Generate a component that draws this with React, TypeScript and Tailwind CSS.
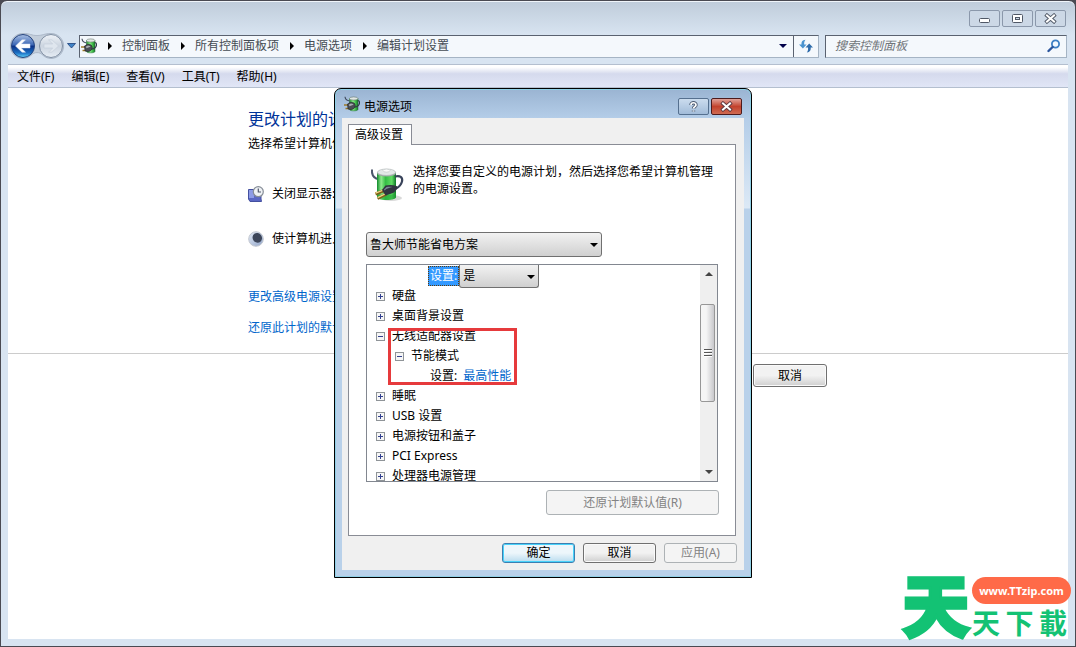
import React, { useState } from 'react';
import { clsx } from 'clsx';

const BREADCRUMBS = ['控制面板', '所有控制面板项', '电源选项', '编辑计划设置'];
const MENUS = ['文件(F)', '编辑(E)', '查看(V)', '工具(T)', '帮助(H)'];
const PLANS = ['鲁大师节能省电方案'];

/* ---------- icons ---------- */

function PowerIcon() {
  return (
    <svg width="16" height="16" viewBox="0 0 16 16" className="shrink-0" aria-hidden="true">
      <defs>
        <linearGradient id="cellSmall" x1="0" x2="1" y1="0" y2="0">
          <stop offset="0" stopColor="#1f9433" />
          <stop offset="0.4" stopColor="#8bea86" />
          <stop offset="0.7" stopColor="#43c04c" />
          <stop offset="1" stopColor="#17752a" />
        </linearGradient>
      </defs>
      <path d="M5.500 2.500v11c0 1.800 8.500 1.800 8.500 0v-11z" fill="url(#cellSmall)" stroke="#256b33" strokeWidth="0.5" />
      <ellipse cx="9.700" cy="2.500" rx="4.200" ry="1.600" fill="#e0e7e3" stroke="#6d7a73" strokeWidth="0.6" />
      <path d="M1 .8C1.200 3 2.500 4.500 5.500 5" fill="none" stroke="#3a4456" strokeWidth="1.100" />
      <path d="M13.800 4.500c2.200.3 2.200 3.500.2 5.200-1 .9-2 1.300-3.500 1.500" fill="none" stroke="#2f3848" strokeWidth="1.200" />
      <path d="M0 9h4M1.500 12.500h3.500" stroke="#9c7a28" strokeWidth="1.400" />
      <path d="M3.500 8 6.500 6.300c2.500-.3 4.700.9 4.700 3.200 0 2.400-2 3.800-4 4L4 13z" fill="#4a4e55" stroke="#1c1f24" strokeWidth="0.6" />
      <path d="M5 8.500 7 7.400c1.200.1 2 .6 2.500 1.400L5.400 10.200z" fill="#a9aeb4" />
    </svg>
  );
}

function PowerIconLarge() {
  return (
    <svg width="36" height="36" viewBox="0 0 36 36" className="shrink-0" aria-hidden="true">
      <defs>
        <linearGradient id="cell" x1="0" x2="1" y1="0" y2="0">
          <stop offset="0" stopColor="#0f8a2b" />
          <stop offset="0.22" stopColor="#8fea8c" />
          <stop offset="0.45" stopColor="#35bd45" />
          <stop offset="0.78" stopColor="#5fdc62" />
          <stop offset="1" stopColor="#0c7425" />
        </linearGradient>
      </defs>
      <ellipse cx="22" cy="31" rx="11" ry="3" fill="#d9d9d9" />
      <path d="M8 6v24c0 4 19 4 19 0V6z" fill="url(#cell)" />
      <path d="M8 25v5c0 4 19 4 19 0v-5c0 4-19 4-19 0z" fill="#27a83b" opacity="0.6" />
      <ellipse cx="17.500" cy="6" rx="9.500" ry="3.600" fill="#9ea8a5" />
      <ellipse cx="17.500" cy="5.200" rx="9" ry="3.200" fill="#e3e8e7" stroke="#a1a9a8" strokeWidth="0.5" />
      <ellipse cx="17.500" cy="3.600" rx="3.500" ry="1.500" fill="#fafafa" stroke="#b4baba" strokeWidth="0.5" />
      <path d="M3 2.500C2.500 7 4.500 10.500 8 12" fill="none" stroke="#4c566b" strokeWidth="2" />
      <path d="M26 9.500c5-1.500 8 1 7 5-.8 3-2.800 5.500-6 7" fill="none" stroke="#39435a" strokeWidth="2.200" />
      <path d="M15 23.500 6.500 27M17.500 27 8.500 31.500" stroke="#806018" strokeWidth="3" />
      <path d="M14.500 23 6.500 26.200M17 26.500 8.500 30.600" stroke="#f0d78a" strokeWidth="1.300" />
      <path d="M13 23 16.500 18.500c4-1 8-.7 11.500.7 1.500 1.300-1 4.800-4 6.800l-7.500 2.500z" fill="#30343f" />
      <path d="M15 22.500 17.500 20c2-.4 4.500-.5 6 0-3 .5-5.500 1.400-8 3.400z" fill="#7c8496" />
    </svg>
  );
}

function NavButtons() {
  return (
    <svg width="58" height="28" viewBox="0 0 58 28" aria-hidden="true">
      <defs>
        <linearGradient id="backFill" x1="0" x2="0" y1="0" y2="1">
          <stop offset="0" stopColor="#a9bfe3" />
          <stop offset="0.46" stopColor="#3a66b4" />
          <stop offset="0.5" stopColor="#0b2f84" />
          <stop offset="0.8" stopColor="#1c70c4" />
          <stop offset="1" stopColor="#5fd3fa" />
        </linearGradient>
        <linearGradient id="fwdFill" x1="0" x2="0" y1="0" y2="1">
          <stop offset="0" stopColor="#eff3f8" />
          <stop offset="0.5" stopColor="#ccd5e0" />
          <stop offset="1" stopColor="#e6edf5" />
        </linearGradient>
      </defs>
      <path d="M14 1.500c8 0 8 2 14 2s7-2 14-2a12.500 12.500 0 1 1-9 21c-2-2.500-8-2.500-10 0a12.500 12.500 0 1 1-9-21z" fill="#c3cedb" stroke="#a3b0c1" strokeWidth="0.8" />
      <circle cx="14" cy="14" r="11.500" fill="url(#backFill)" stroke="#27457f" />
      <path d="M6.500 14 13 7.800h3.500L12.300 12H21v4h-8.700l4.200 4.200H13z" fill="#fff" stroke="#dce6f5" strokeWidth="0.5" />
      <circle cx="42" cy="14" r="11.500" fill="url(#fwdFill)" stroke="#8190a4" />
      <path d="M49.500 14 43 7.800h-3.500l4.200 4.200H35v4h8.700l-4.200 4.200H43z" fill="#dfe6ee" stroke="#c2ccd8" strokeWidth="0.6" />
    </svg>
  );
}

function RefreshIcon() {
  return (
    <svg width="14" height="14" viewBox="0 0 14 14" aria-hidden="true">
      <path d="M6.500.8C3 1 2.400 3 2.500 5.500H0L3.900 9.500 7.600 5.500H5.200C5 3.800 5.400 2.200 6.500.8z" fill="#4a93cf" />
      <path d="M7.800 13.500c3.500-.4 4.100-2.600 3.900-5H14L10.200 4.500 6.500 8.500H9c.3 2-.1 3.600-1.200 5z" fill="#2f6cab" />
    </svg>
  );
}

function SearchIcon() {
  return (
    <svg width="14" height="14" viewBox="0 0 14 14" aria-hidden="true">
      <circle cx="8.500" cy="5" r="3.600" fill="#f3f9ff" stroke="#3c7fc4" strokeWidth="1.800" />
      <path d="M5.600 8 1.500 12" stroke="#2b569d" strokeWidth="2.400" strokeLinecap="round" />
    </svg>
  );
}

function CloseGlyph({ stroke }: { stroke: string }) {
  return (
    <svg width="13" height="11" viewBox="0 0 13 11" aria-hidden="true">
      <path d="M3 2.500l7 6M10 2.500l-7 6" stroke={stroke} strokeWidth="3.800" strokeLinecap="square" />
      <path d="M3 2.500l7 6M10 2.500l-7 6" stroke="#fff" strokeWidth="2" strokeLinecap="square" />
    </svg>
  );
}

function DisplayIcon() {
  return (
    <svg width="16" height="16" viewBox="0 0 16 16" className="shrink-0" aria-hidden="true">
      <path d="M.5 3.500h12.500V13l.5 2.500H2L.5 13z" fill="#5a67c4" stroke="#4450a0" />
      <path d="M1 4h5v8H1z" fill="#8d9be6" />
      <circle cx="10.300" cy="5.700" r="5" fill="#eef1f4" stroke="#858c96" strokeWidth="1.200" />
      <path d="M10.300 2.500v3.500h2.700" fill="none" stroke="#50586a" strokeWidth="1.200" />
    </svg>
  );
}

function SleepIcon() {
  return (
    <svg width="16" height="16" viewBox="0 0 16 16" className="shrink-0" aria-hidden="true">
      <defs>
        <linearGradient id="moon" x1="0" x2="1" y1="0" y2="1">
          <stop offset="0" stopColor="#e6edf8" />
          <stop offset="1" stopColor="#8fa3c8" />
        </linearGradient>
      </defs>
      <circle cx="8" cy="8" r="7.300" fill="url(#moon)" stroke="#c3c8d0" />
      <ellipse cx="9.300" cy="6.800" rx="4.600" ry="5" fill="#3d465a" transform="rotate(-35 9.300 6.800)" />
    </svg>
  );
}

function Triangle({ dir = 'down', color = '#000' }: { dir?: 'down' | 'up' | 'right'; color?: string }) {
  const d = { down: 'M0 2h8L4 6z', up: 'M0 6h8L4 2z', right: 'M2 0v8l4-4z' }[dir];
  return (
    <svg width="8" height="8" viewBox="0 0 8 8" className="shrink-0" aria-hidden="true">
      <path d={d} fill={color} />
    </svg>
  );
}

/* ---------- controls ---------- */

interface ButtonProps {
  children: React.ReactNode;
  variant?: 'normal' | 'primary';
  disabled?: boolean;
  className?: string;
}

function Button({ children, variant = 'normal', disabled, className }: ButtonProps) {
  return (
    <button
      type="button"
      disabled={disabled}
      className={clsx(
        'flex items-center justify-center rounded-[3px] border',
        disabled && 'border-[#adb2b5] bg-[#f4f4f4] text-[#838383]',
        !disabled && variant === 'normal' && 'border-[#707070] bg-linear-to-b from-[#f2f2f2] from-50% to-[#cfcfcf] inset-shadow-[0_0_0_1px_#fafafa]',
        !disabled && variant === 'primary' && 'border-[#3c7fb1] bg-linear-to-b from-[#edf6fb] from-50% to-[#b9dcee] inset-shadow-[0_0_0_1px_#48d2fa]',
        className
      )}
    >
      {children}
    </button>
  );
}

interface PickerProps {
  label: string;
  options: string[];
  className: string;
}

function Picker({ label, options, className }: PickerProps) {
  return (
    <div className="relative flex w-fit items-center">
      <select
        aria-label={label}
        className={clsx(
          'appearance-none rounded-[3px] border border-[#707070] bg-linear-to-b from-[#f2f2f2] to-[#d0d0d0] pl-[3px] pr-4 text-xs leading-4',
          className
        )}
      >
        {options.map((o) => <option key={o}>{o}</option>)}
      </select>
      <span className="pointer-events-none absolute right-1 flex"><Triangle /></span>
    </div>
  );
}

function Expander({ open, label }: { open?: boolean; label: string }) {
  return (
    <button type="button" aria-label={label} aria-expanded={!!open} className="flex shrink-0">
      <svg width="9" height="9" viewBox="0 0 9 9">
        <rect x="0.5" y="0.5" width="8" height="8" fill="#f6f6f6" stroke="#8f9498" />
        <path d={open ? 'M2 4.500h5' : 'M2 4.500h5M4.500 2v5'} stroke="#33418f" />
      </svg>
    </button>
  );
}

function TreeRow({ label, open, nested }: { label: string; open?: boolean; nested?: boolean }) {
  return (
    <div className={clsx('flex h-5 items-center gap-[7px]', nested ? 'pl-7' : 'pl-[9px]')}>
      <Expander open={open} label={label} />
      <span>{label}</span>
    </div>
  );
}

function SettingsTree() {
  return (
    <div className="flex h-[218px] overflow-hidden border border-[#828790] bg-white">
      <ul className="min-w-0 flex-1">
        <li className="flex h-[21px] items-start pl-[61px]">
          <span className="mt-px h-5 border border-dotted border-[#5d3a0c] bg-[#3399ff] px-px leading-[18px] text-white">设置:</span>
          <Picker label="设置" options={['是', '否']} className="h-[23px] w-20 rounded-t-none border-t-0" />
        </li>
        <li><TreeRow label="硬盘" /></li>
        <li><TreeRow label="桌面背景设置" /></li>
        <li className="relative">
          <TreeRow label="无线适配器设置" open />
          <TreeRow label="节能模式" open nested />
          <div className="flex h-5 items-center gap-1.5 pl-[63px]">
            <span>设置:</span>
            <a href="#performance" className="text-[#0066cc]">最高性能</a>
          </div>
          {/* highlight around the wireless adapter group */}
          <div className="pointer-events-none absolute left-[21px] top-0.5 h-[57px] w-[129px] border-3 border-[#e63a3c]" />
        </li>
        <li><TreeRow label="睡眠" /></li>
        <li><TreeRow label="USB 设置" /></li>
        <li><TreeRow label="电源按钮和盖子" /></li>
        <li><TreeRow label="PCI Express" /></li>
        <li><TreeRow label="处理器电源管理" /></li>
      </ul>

      <div className="flex w-[17px] flex-col bg-[#efefef]">
        <button type="button" aria-label="向上滚动" className="flex h-[18px] items-center justify-center"><Triangle dir="up" color="#444" /></button>
        <div className="flex-1 pt-[21px]">
          <div className="flex h-[98px] w-[15px] flex-col items-center justify-center gap-px rounded-xs border border-[#979797] bg-linear-to-r from-[#f5f5f5] from-40% to-[#c8c8cc]">
            <i className="h-0.5 w-2 border-b border-white bg-[#555]" />
            <i className="h-0.5 w-2 border-b border-white bg-[#555]" />
            <i className="h-0.5 w-2 border-b border-white bg-[#555]" />
          </div>
        </div>
        <button type="button" aria-label="向下滚动" className="flex h-[18px] items-center justify-center"><Triangle color="#444" /></button>
      </div>
    </div>
  );
}

function PowerDialog() {
  return (
    <div
      role="dialog"
      aria-label="电源选项"
      className="absolute left-[333px] top-[87px] w-[418px] rounded-t-[7px] border border-black bg-[linear-gradient(#9ab4d2,#b4cde8_29px,#dce9f6_119px,#b9d1ea_120px)] px-[7px] pb-[7px] inset-shadow-[0_0_0_1px_#8fd0e6]"
    >
      <div className="flex h-[29px] items-center pl-0.5 pr-0.5">
        <PowerIcon />
        <h2 className="ml-1 mt-1.5 flex-1">电源选项</h2>
        <div className="flex gap-0.5">
          <button type="button" aria-label="帮助" className="mt-1.5 flex h-[17px] w-[31px] items-center justify-center rounded-xs border border-[#55708f] bg-linear-to-b from-[#cbdcee] to-[#a2bcd9]">
            <svg width="9" height="12" viewBox="0 0 9 12" aria-hidden="true">
              <path d="M2 4c0-3 5-3 5 0 0 1.500-2.500 1.700-2.500 3.500M4.500 9.500v1" fill="none" stroke="#4c5a70" strokeWidth="3.400" />
              <path d="M2 4c0-3 5-3 5 0 0 1.500-2.500 1.700-2.500 3.500M4.500 9.500v1" fill="none" stroke="#fff" strokeWidth="1.700" />
            </svg>
          </button>
          <button type="button" aria-label="关闭" className="mt-1.5 flex h-[17px] w-[31px] items-center justify-center rounded-xs border border-[#4d1a1c] bg-linear-to-b from-[#dfa098] via-[#c2412c] to-[#cf6a52]">
            <CloseGlyph stroke="#5c3a42" />
          </button>
        </div>
      </div>

      <div className="bg-[#f0f0f0] pb-[7px] pl-1.5 pr-[7px] pt-1.5">
        <div role="tablist" className="flex">
          <button type="button" role="tab" aria-selected="true" className="z-10 -mb-px h-[21px] border border-b-0 border-[#898c95] bg-white pl-1.5 pr-2 leading-4">
            高级设置
          </button>
        </div>
        <div className="mr-px border border-[#898c95] bg-white pb-5 pl-[17px] pr-[17px] pt-4">
          <div className="flex gap-2">
            <div className="py-1.5 pl-[3px]"><PowerIconLarge /></div>
            <p className="mt-0.5 leading-[17px]">选择您要自定义的电源计划，然后选择您希望计算机管理的电源设置。</p>
          </div>
          <div className="mb-[7px] mt-[23px]">
            <Picker label="电源计划" options={PLANS} className="h-[25px] w-[236px]" />
          </div>
          <SettingsTree />
          <div className="-mr-px mt-2 flex justify-end">
            <Button disabled className="h-[25px] w-[173px]">还原计划默认值(R)</Button>
          </div>
        </div>
        <div className="mt-[7px] flex justify-end gap-2">
          <Button variant="primary" className="h-5 w-[73px]">确定</Button>
          <Button className="h-5 w-[73px]">取消</Button>
          <Button disabled className="h-5 w-[73px]">应用(A)</Button>
        </div>
      </div>
    </div>
  );
}

/* ---------- explorer window ---------- */

function CaptionButton({ label, children }: { label: string; children: React.ReactNode }) {
  return (
    <button type="button" aria-label={label} className="flex h-[17px] w-[31px] items-center justify-center rounded-xs border border-[#8b98ab] bg-[#ccd8e6]">
      {children}
    </button>
  );
}

function TitleBar() {
  return (
    <div className="flex justify-end gap-0.5 pb-[5px] pr-0.5 pt-[9px]">
      <CaptionButton label="最小化">
        <svg width="11" height="9" viewBox="0 0 11 9"><rect x="0.5" y="4.500" width="10" height="4" rx="1" fill="#fff" stroke="#505866" /></svg>
      </CaptionButton>
      <CaptionButton label="最大化">
        <svg width="11" height="9" viewBox="0 0 11 9">
          <rect x="0.5" y="0.5" width="10" height="8" rx="1" fill="#fff" stroke="#505866" />
          <rect x="3.500" y="3.500" width="4" height="2" fill="#ccd8e6" stroke="#505866" />
        </svg>
      </CaptionButton>
      <CaptionButton label="关闭"><CloseGlyph stroke="#505866" /></CaptionButton>
    </div>
  );
}

function AddressRow() {
  const [query, setQuery] = useState('');

  return (
    <div className="flex items-center pb-1 pl-px pr-px">
      <NavButtons />
      <button type="button" aria-label="最近浏览" className="mr-[3px] flex">
        <svg width="9" height="6" viewBox="0 0 9 6"><path d="M.5.5h8l-4 4.500z" fill="#3f84c8" stroke="#1d3f78" strokeWidth="0.8" /></svg>
      </button>
      <nav className="flex h-[23px] flex-1 items-center border border-[#a5b4c4] border-t-[#5a6270] border-l-[#5a6270] bg-[#f4f8fc] pl-px text-[#444c54]">
        <PowerIcon />
        <ol className="flex flex-1">
          {BREADCRUMBS.map((crumb) => (
            <li key={crumb} className="flex items-center">
              <span className="flex w-[25px] justify-center"><Triangle dir="right" /></span>
              <a href="#crumb">{crumb}</a>
            </li>
          ))}
        </ol>
        <button type="button" aria-label="历史记录" className="flex w-5 justify-center"><Triangle color="#00004a" /></button>
        <button type="button" aria-label="刷新" className="flex h-full w-[25px] items-center justify-center border-l border-[#5a6270]"><RefreshIcon /></button>
      </nav>
      <label className="ml-1.5 flex h-[23px] w-[242px] items-center border border-[#a5b4c4] border-t-[#5a6270] border-l-[#5a6270] bg-[#f4f8fc] pl-[9px] pr-[5px]">
        <input
          value={query}
          onChange={(e) => setQuery(e.target.value)}
          aria-label="搜索控制面板"
          placeholder="搜索控制面板"
          className="min-w-0 flex-1 bg-transparent italic leading-4 outline-none placeholder:text-[#70757a]"
        />
        <SearchIcon />
      </label>
    </div>
  );
}

function Watermark() {
  return (
    <div className="absolute bottom-1 right-1 flex items-end text-[#13c274]">
      <span className="w-[70px] text-[68px] font-black leading-[72px] [-webkit-text-stroke:3px_#13c274]">天</span>
      <div className="w-[99px]">
        <div className="flex h-[27px] items-center justify-center rounded-full bg-[#ff6a48] font-['Noto_Sans',sans-serif] text-[11px] font-bold text-white">www.TTzip.com</div>
        <div className="flex justify-between pr-1 text-[28px] font-bold leading-[38px]">
          <span>天</span>
          <span>下</span>
          <span>載</span>
        </div>
      </div>
    </div>
  );
}

export default function App() {
  return (
    <div className="bg-[#4a4a52] font-['Noto_Sans','Noto_Sans_CJK_SC',sans-serif] text-xs leading-4 text-black">
      <div className="relative flex min-h-screen flex-col rounded-t-[7px] border border-[#4a4a52] bg-linear-to-b from-[#bfccda] to-[#d8e4f1] to-[34px] px-[7px] pb-[7px] inset-shadow-[0_1px_0_#f0f5fa]">
        <TitleBar />
        <AddressRow />

        <ul className="flex h-6 items-center gap-[17px] border-y border-[#b4bfcf] bg-linear-to-b from-white from-10% via-[#d5daed] via-40% to-[#e1e6f6] pl-[9px] pt-0.5">
          {MENUS.map((m) => (
            <li key={m}><button type="button">{m}</button></li>
          ))}
        </ul>

        <main className="flex-1 bg-white">
          <section className="border-b border-[#cccccc] pb-[17px] pl-60 pt-5">
            <h1 className="text-base leading-[22px] text-[#003399]">更改计划的设置</h1>
            <p className="mt-1.5">选择希望计算机使用</p>
            <div className="mt-[34px] flex items-center gap-2"><DisplayIcon />关闭显示器:</div>
            <div className="mt-[29px] flex items-center gap-2"><SleepIcon />使计算机进入</div>
            <a href="#advanced" className="mt-[42px] block w-fit text-[#0066cc]">更改高级电源设置</a>
            <a href="#restore" className="mt-[15px] block w-fit text-[#0066cc]">还原此计划的默认</a>
          </section>
          <div className="pl-[745px] pt-[10px]">
            <Button className="h-[23px] w-[74px]">取消</Button>
          </div>
        </main>

        <PowerDialog />
        <Watermark />
      </div>
    </div>
  );
}
